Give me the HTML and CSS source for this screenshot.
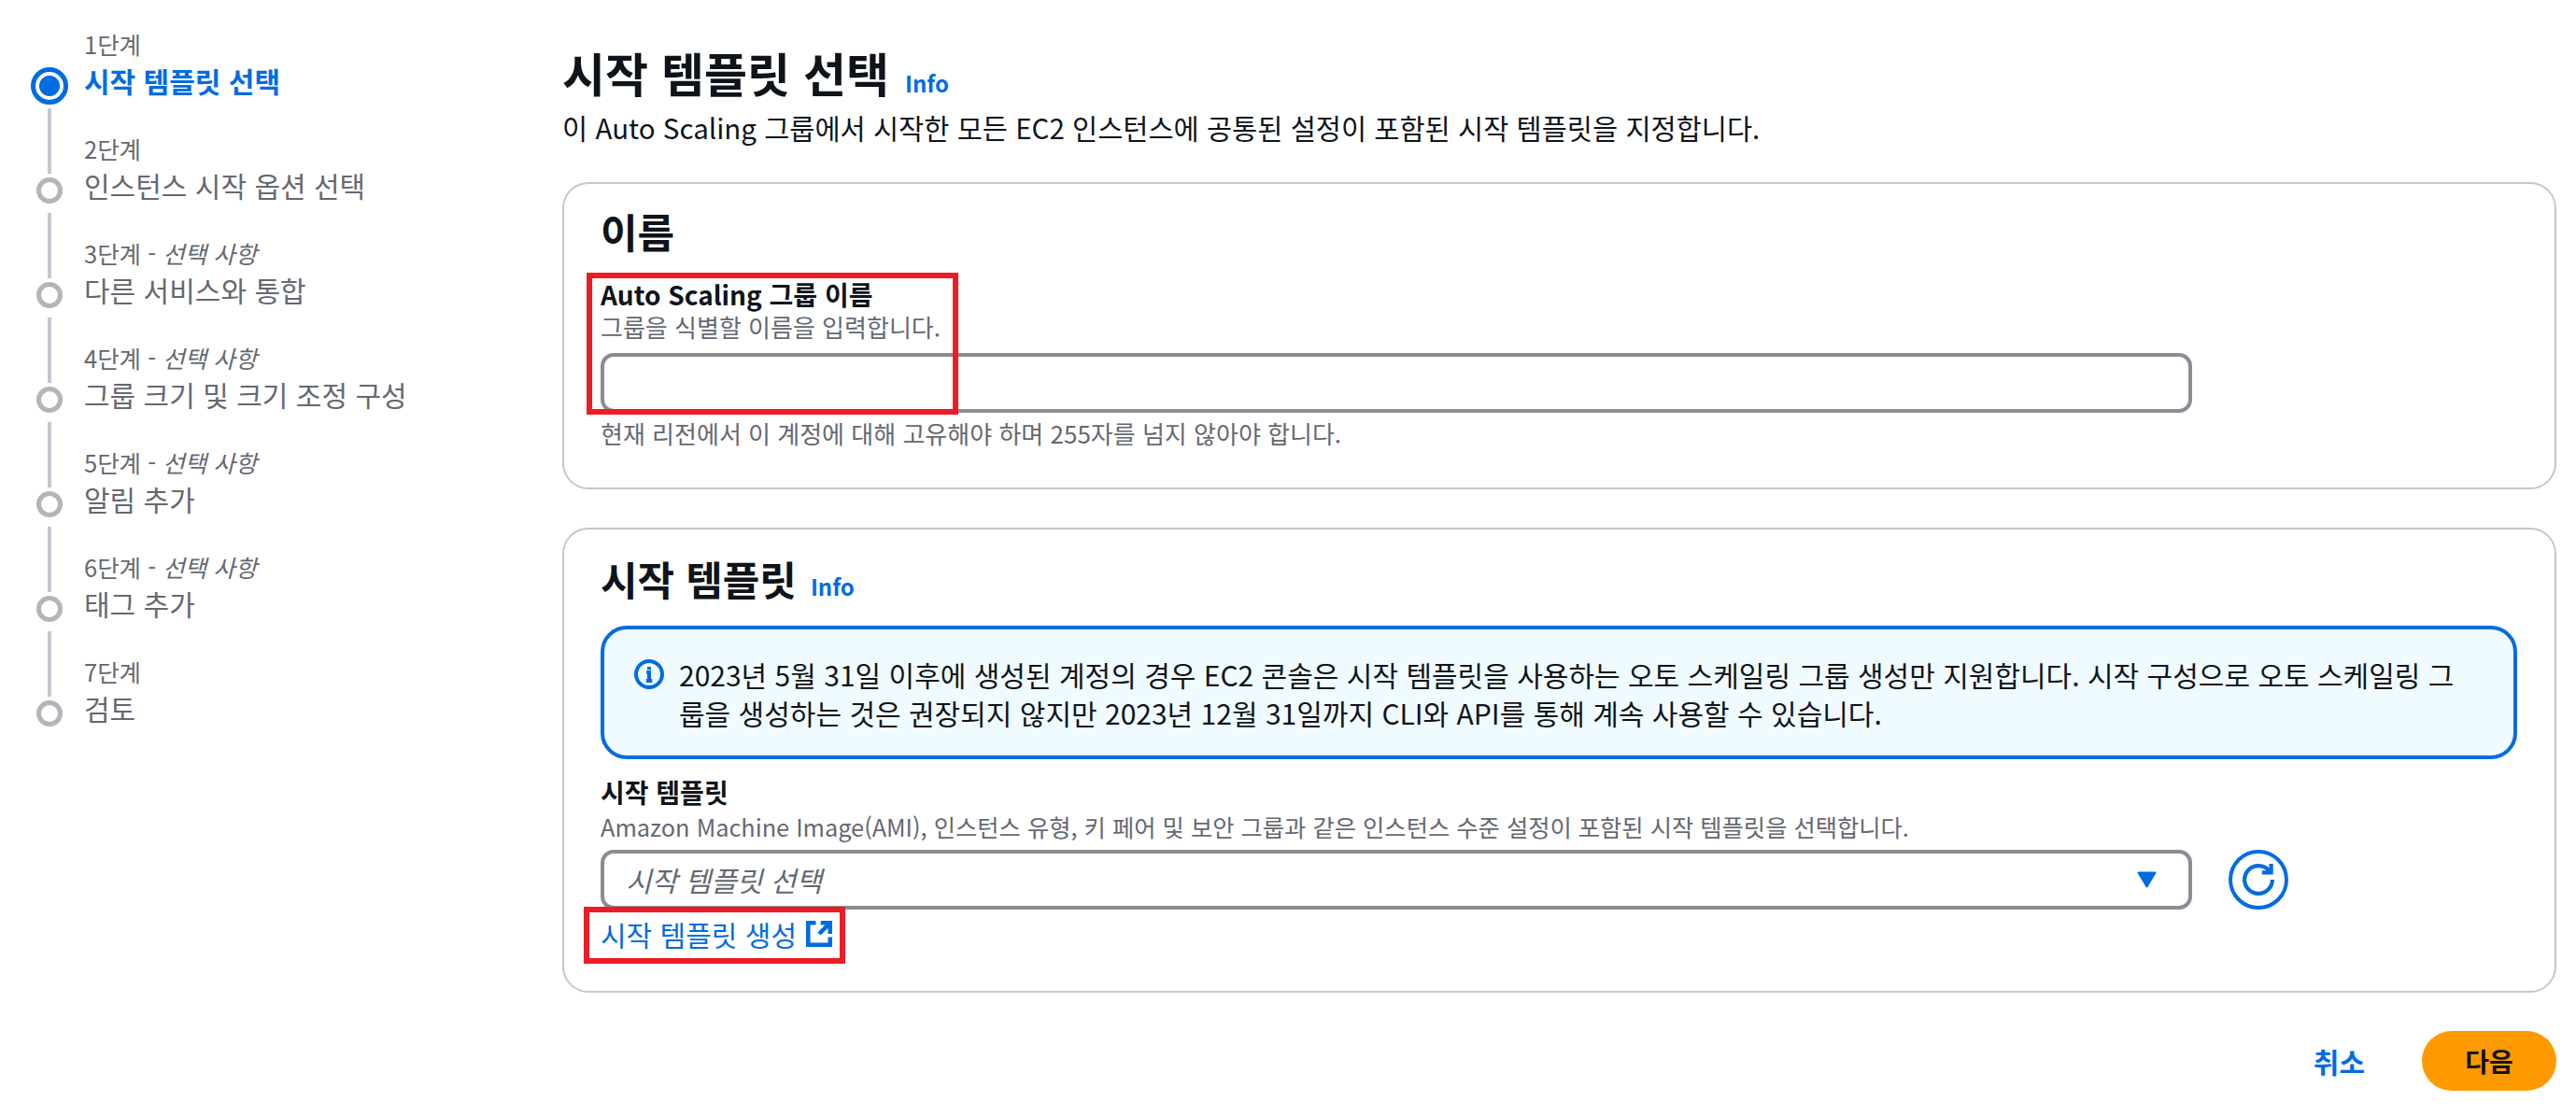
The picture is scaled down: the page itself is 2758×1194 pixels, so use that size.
FILE: index.html
```html
<!DOCTYPE html>
<html lang="ko">
<head>
    <meta charset="UTF-8">
    <title>시작 템플릿 선택</title>
    <link rel="stylesheet" href="styles.css">
</head>
<body>
    <nav class="steps">
        <div class="step step-active">
            <span class="step-line"></span>
            <span class="step-label">1단계</span>
            <span class="step-dot"></span>
            <span class="step-title">시작 템플릿 선택</span>
        </div>
        <div class="step">
            <span class="step-line"></span>
            <span class="step-label">2단계</span>
            <span class="step-dot"></span>
            <span class="step-title">인스턴스 시작 옵션 선택</span>
        </div>
        <div class="step">
            <span class="step-line"></span>
            <span class="step-label">3단계 - <em>선택 사항</em></span>
            <span class="step-dot"></span>
            <span class="step-title">다른 서비스와 통합</span>
        </div>
        <div class="step">
            <span class="step-line"></span>
            <span class="step-label">4단계 - <em>선택 사항</em></span>
            <span class="step-dot"></span>
            <span class="step-title">그룹 크기 및 크기 조정 구성</span>
        </div>
        <div class="step">
            <span class="step-line"></span>
            <span class="step-label">5단계 - <em>선택 사항</em></span>
            <span class="step-dot"></span>
            <span class="step-title">알림 추가</span>
        </div>
        <div class="step">
            <span class="step-line"></span>
            <span class="step-label">6단계 - <em>선택 사항</em></span>
            <span class="step-dot"></span>
            <span class="step-title">태그 추가</span>
        </div>
        <div class="step">
            <span class="step-line"></span>
            <span class="step-label">7단계</span>
            <span class="step-dot"></span>
            <span class="step-title">검토</span>
        </div>
    </nav>

    <main class="content">
        <h1>시작 템플릿 선택 <a class="info info-h1" href="#">Info</a></h1>
        <p class="subtitle">이 Auto Scaling 그룹에서 시작한 모든 EC2 인스턴스에 공통된 설정이 포함된 시작 템플릿을 지정합니다.</p>

        <section class="card card-name">
            <h2>이름</h2>
            <div class="field-label">Auto Scaling 그룹 이름</div>
            <div class="field-desc">그룹을 식별할 이름을 입력합니다.</div>
            <input class="text-input" type="text">
            <div class="field-hint">현재 리전에서 이 계정에 대해 고유해야 하며 255자를 넘지 않아야 합니다.</div>
        </section>

        <section class="card card-template">
            <h2>시작 템플릿 <a class="info" href="#">Info</a></h2>
            <div class="alert">
                <svg class="alert-icon" viewBox="0 0 16 16">
                    <circle cx="8" cy="8" r="7"/>
                    <path d="M8 11.5V7H6.6M6.4 11.5h3.2M8 4v1.6"/>
                </svg>
                <p>2023년 5월 31일 이후에 생성된 계정의 경우 EC2 콘솔은 시작 템플릿을 사용하는 오토 스케일링 그룹 생성만 지원합니다. 시작 구성으로 오토 스케일링 그룹을 생성하는 것은 권장되지 않지만 2023년 12월 31일까지 CLI와 API를 통해 계속 사용할 수 있습니다.</p>
            </div>
            <div class="field-label label-template">시작 템플릿</div>
            <div class="field-desc desc-template">Amazon Machine Image(AMI), 인스턴스 유형, 키 페어 및 보안 그룹과 같은 인스턴스 수준 설정이 포함된 시작 템플릿을 선택합니다.</div>
            <div class="select-row">
                <div class="select">
                    <span class="placeholder">시작 템플릿 선택</span>
                    <svg class="caret" viewBox="0 0 21 18"><path d="M1.5 1.5h18L10.5 16.5z"/></svg>
                </div>
                <button class="refresh" type="button">
                    <svg viewBox="0 0 16 16">
                        <path d="M15 8c0 3.87-3.13 7-7 7s-7-3.13-7-7 3.13-7 7-7c2.37 0 4.47 1.18 5.74 2.98"/>
                        <path d="M14.4 0v4.4h-4.6"/>
                    </svg>
                </button>
            </div>
            <a class="create-link" href="#">시작 템플릿 생성
                <svg viewBox="0 0 16 16">
                    <path d="M14.7 8V1.3H9M14.7 1.3 8 8M6 1.3H1.3v13.4h13.4V10"/>
                </svg>
            </a>
        </section>

        <div class="actions">
            <a class="cancel" href="#">취소</a>
            <button class="next" type="button">다음</button>
        </div>
    </main>

    <!-- 빨간 표시 (스크린샷 위에 그려진 주석) -->
    <div class="mark mark-name"></div>
    <div class="mark mark-link"></div>
</body>
</html>
```

FILE: styles.css
```css
* {
    box-sizing: border-box;
}
body {
    margin: 0;
    height: 1194px;
    overflow: hidden;
    display: flex;
    position: relative;
    background: #fff;
    color: #0f141a;
    font-family: "Noto Sans CJK KR", "Noto Sans", sans-serif;
}
a {
    color: #006ce0;
    text-decoration: none;
}

/* 왼쪽 단계 목록 */
.steps {
    width: 602px;
    flex-shrink: 0;
    padding-left: 33px;
    color: #656871;
}
.step {
    display: grid;
    grid-template-columns: 40px 1fr;
    grid-template-rows: 76px 36px;
    column-gap: 17px;
}
.step-active {
    grid-template-rows: 74px 36px;
}
.step-line {
    justify-self: center;
    width: 4px;
    margin-top: 6px;
    background: #c6c6cd;
}
.step-active .step-line {
    visibility: hidden;
}
.step-label {
    align-self: end;
    margin-bottom: 13px;
    font-size: 25.5px;
    line-height: 28px;
}
.step-label em {
    font-style: italic;
}
.step-dot {
    place-self: center;
    width: 28px;
    height: 28px;
    border: 5px solid #b4b4bb;
    border-radius: 50%;
    background: #fff;
}
.step-active .step-dot {
    width: 40px;
    height: 40px;
    border-color: #006ce0;
    background: radial-gradient(circle, #006ce0 10.5px, #fff 11.5px);
}
.step-title {
    margin-top: -2px;
    font-size: 30px;
    line-height: 28px;
    white-space: nowrap;
}
.step-active .step-title {
    color: #006ce0;
    font-weight: 700;
}

/* 본문 */
.content {
    width: 2135px;
    padding-top: 47px;
}
h1 {
    margin: 0;
    font-size: 50px;
    line-height: 60px;
    height: 60px;
    font-weight: 700;
}
h2 {
    margin: 0;
    font-size: 43px;
    line-height: 56px;
    height: 56px;
    font-weight: 700;
}
.info {
    margin-left: 3px;
    font-size: 24px;
    line-height: 1;
    font-weight: 700;
}
.subtitle {
    margin: 11px 0 0;
    font-size: 29.5px;
    line-height: 36px;
}
.card {
    border: 2px solid #c6c6cd;
    border-radius: 28px;
    padding: 22px 40px 42px 39px;
    margin-top: 41px;
}
.card-template {
    margin-top: 41px;
    padding-top: 24px;
    padding-bottom: 43px;
}
.field-label {
    margin-top: 22px;
    font-size: 28px;
    line-height: 36px;
    font-weight: 700;
}
.field-desc {
    margin-top: 1px;
    font-size: 26px;
    line-height: 32px;
    color: #656871;
}
.field-hint {
    margin-top: 6px;
    font-size: 26px;
    line-height: 32px;
    color: #656871;
}
.text-input {
    display: block;
    width: 1704px;
    height: 64px;
    margin-top: 12px;
    border: 4px solid #8c8c94;
    border-radius: 14px;
    background: #fff;
}

/* 안내 상자 */
.alert {
    display: flex;
    gap: 16px;
    height: 143px;
    margin-top: 23px;
    padding: 28px 30px 0 32px;
    border: 4px solid #006ce0;
    border-radius: 28px;
    background: #f0fbff;
}
.alert p {
    max-width: 1912px;
    margin: 0;
    font-size: 30px;
    line-height: 41px;
}
.alert-icon {
    flex-shrink: 0;
    width: 32px;
    height: 32px;
    margin-top: 4px;
    fill: none;
    stroke: #006ce0;
    stroke-width: 2;
}
.label-template {
    margin-top: 17px;
}
.desc-template {
    margin-top: 3px;
    font-size: 25.3px;
}
.select-row {
    display: flex;
    align-items: center;
    gap: 39px;
    margin-top: 9px;
}
.select {
    display: flex;
    align-items: center;
    justify-content: space-between;
    width: 1704px;
    height: 64px;
    padding: 0 34px 0 23px;
    border: 4px solid #8c8c94;
    border-radius: 14px;
}
.placeholder {
    font-size: 30px;
    font-style: italic;
    color: #656871;
}
.caret {
    width: 21px;
    height: 18px;
    fill: #006ce0;
    stroke: #006ce0;
    stroke-width: 2;
    stroke-linejoin: round;
}
.refresh {
    display: flex;
    align-items: center;
    justify-content: center;
    width: 64px;
    height: 64px;
    padding: 0;
    border: 4px solid #006ce0;
    border-radius: 50%;
    background: #fff;
}
.refresh svg {
    width: 34px;
    height: 34px;
    fill: none;
    stroke: #006ce0;
    stroke-width: 2;
}
.create-link {
    display: inline-flex;
    align-items: center;
    gap: 10px;
    margin-top: 8px;
    font-size: 30px;
    line-height: 36px;
}
.create-link svg {
    width: 28px;
    height: 28px;
    fill: none;
    stroke: #006ce0;
    stroke-width: 2.6;
}

/* 하단 버튼 */
.actions {
    display: flex;
    align-items: center;
    justify-content: flex-end;
    gap: 61px;
    margin-top: 41px;
}
.cancel {
    font-size: 30px;
    font-weight: 700;
}
.next {
    width: 144px;
    height: 64px;
    border: none;
    border-radius: 32px;
    background: #ff9900;
    color: #0f141a;
    font-family: inherit;
    font-size: 28px;
    font-weight: 700;
}

/* 주석 표시 */
.mark {
    position: absolute;
    border: 6px solid #ed1c24;
}
.mark-name {
    left: 628px;
    top: 292px;
    width: 398px;
    height: 152px;
}
.mark-link {
    left: 625px;
    top: 971px;
    width: 280px;
    height: 61px;
}
```
